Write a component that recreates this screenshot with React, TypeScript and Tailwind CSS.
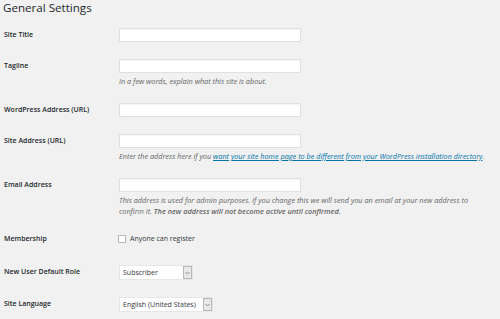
import React from "react";

const font = { fontFamily: '"Open Sans", "Noto Sans", sans-serif' };

function Label({ children }: { children: React.ReactNode }) {
  return (
    <div className="w-[115px] shrink-0 text-[7px] font-semibold leading-[14px] text-[#23282d]">
      {children}
    </div>
  );
}

function TextInput() {
  return <div className="h-[14px] w-[182px] border border-[#e0e0e0] bg-white shadow-[inset_0_1px_1px_rgba(0,0,0,0.04)]" />;
}

function Select({ value, width }: { value: string; width: string }) {
  return (
    <div className={`flex h-[15px] ${width} items-stretch border border-[#e6e6e6] bg-white`}>
      <div className="flex-1 pl-[3px] text-[7px] leading-[13px] text-[#32373c]">{value}</div>
      <div className="flex w-[9px] items-center justify-center border border-[#b9b9b9] bg-[#e8e8e8]">
        <svg width="5" height="4" viewBox="0 0 5 4">
          <path d="M0.5 1 L2.5 3 L4.5 1" fill="none" stroke="#777" strokeWidth="0.8" />
        </svg>
      </div>
    </div>
  );
}

function Desc({ children, className = "" }: { children: React.ReactNode; className?: string }) {
  return (
    <div className={`text-[7.3px] italic leading-[11px] text-[#666] ${className}`}>{children}</div>
  );
}

export default function App() {
  return (
    <div className="h-[319px] w-[500px] overflow-hidden bg-[#f1f1f1]" style={font}>
      <div className="pl-[3px] text-[11.6px] leading-[16px] text-[#23282d]">General Settings</div>

      <div className="ml-[4px]">
        <div className="mt-[12px] flex">
          <Label>Site Title</Label>
          <TextInput />
        </div>

        <div className="mt-[17px] flex">
          <Label>Tagline</Label>
          <div>
            <TextInput />
            <Desc className="mt-[3px]">In a few words, explain what this site is about.</Desc>
          </div>
        </div>

        <div className="mt-[16px] flex">
          <Label>WordPress Address (URL)</Label>
          <TextInput />
        </div>

        <div className="mt-[17px] flex">
          <Label>Site Address (URL)</Label>
          <div>
            <TextInput />
            <Desc className="mt-[3px] whitespace-nowrap">
              Enter the address here if you{" "}
              <span className="text-[#0073aa] underline">
                want your site home page to be different from your WordPress installation directory
              </span>
              .
            </Desc>
          </div>
        </div>

        <div className="mt-[16px] flex">
          <Label>Email Address</Label>
          <div>
            <TextInput />
            <Desc className="mt-[3px] w-[362px]">
              This address is used for admin purposes. If you change this we will send you an email at your new address to confirm it.{" "}
              <span className="font-semibold">The new address will not become active until confirmed.</span>
            </Desc>
          </div>
        </div>

        <div className="mt-[15px] flex">
          <Label>Membership</Label>
          <div className="flex h-[14px] items-center">
            <div className="-ml-[1px] h-[8px] w-[8px] border border-[#b4b9be] bg-white" />
            <span className="ml-[4px] text-[7px] text-[#32373c]">Anyone can register</span>
          </div>
        </div>

        <div className="mt-[19px] flex">
          <Label>New User Default Role</Label>
          <Select value="Subscriber" width="w-[74px]" />
        </div>

        <div className="mt-[17px] flex">
          <Label>Site Language</Label>
          <Select value="English (United States)" width="w-[94px]" />
        </div>
      </div>
    </div>
  );
}
